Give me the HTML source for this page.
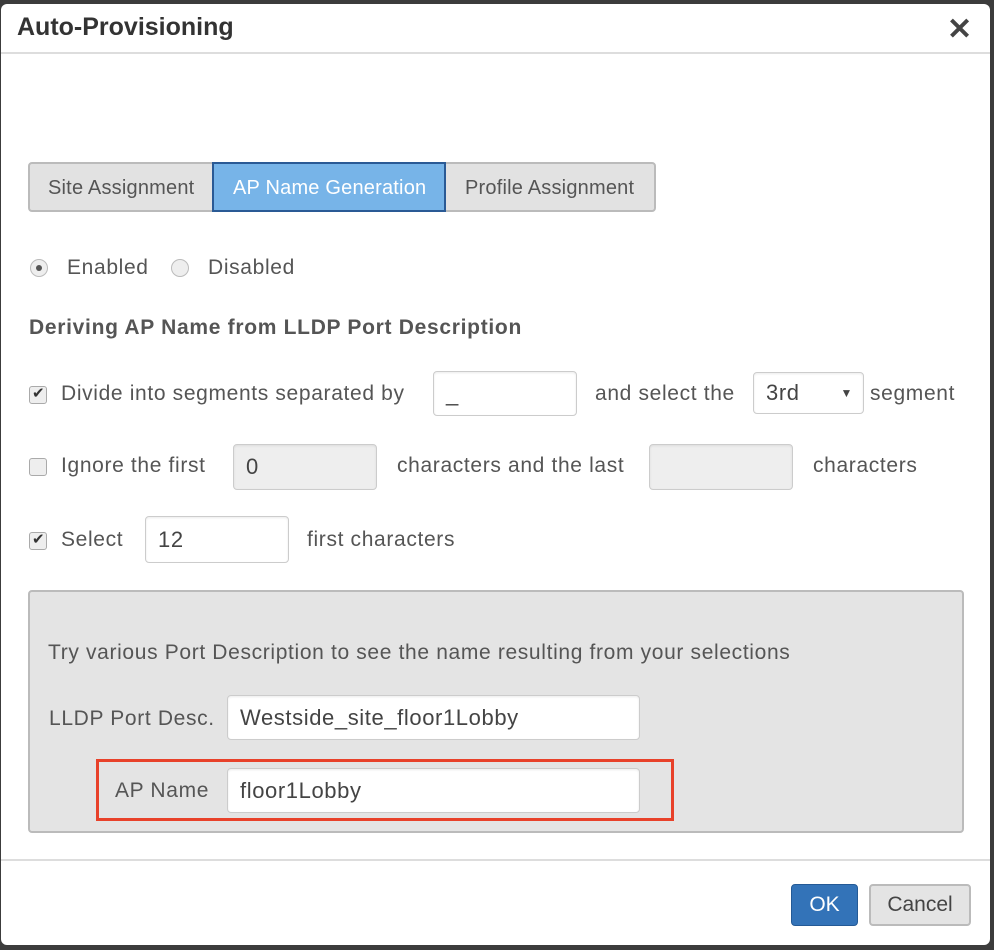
<!DOCTYPE html><html><head><style>
body{margin:0;width:994px;height:950px;background:#3c3c3c;font-family:"Liberation Sans",sans-serif;color:#555;position:relative;overflow:hidden}
.d{position:absolute;left:1px;top:4px;width:989px;height:941px;background:#fff;border-radius:6px}
.a{position:absolute;white-space:nowrap}
.t{font-size:21px;line-height:24px;letter-spacing:0.65px}
.tab{font-size:20px;line-height:24px;letter-spacing:0.2px}
.inp{position:absolute;box-sizing:border-box;border:1px solid #ccc;border-radius:4px;background:#fff;font-size:22px;letter-spacing:0.6px;padding-left:12px;color:#444;box-shadow:inset 0 1px 2px rgba(0,0,0,.08)}
.dis{background:#eee}
.cb{position:absolute;width:18px;height:18px;box-sizing:border-box;border:1px solid #aaa;border-radius:3px;background:#eee}
.cb.on::after{content:"✔";position:absolute;left:2px;top:-3px;font-size:15px;color:#333}
.rd{position:absolute;width:18px;height:18px;box-sizing:border-box;border:1px solid #bbb;border-radius:50%;background:#eee}
</style></head><body>
<div class="d">
<div class="a" style="left:16px;top:9px;font-size:25px;font-weight:bold;color:#333">Auto-Provisioning</div>
<div class="a" style="left:946px;top:8px;font-size:30px;font-weight:bold;color:#444">✕</div>
<div class="a" style="left:0;top:48px;width:989px;height:2px;background:#ddd"></div>

<div class="a" style="left:27px;top:158px;width:628px;height:50px;border:2px solid #bbb;border-radius:4px;background:#e2e2e2;box-sizing:border-box"></div>
<div class="a tab" style="left:47px;top:172px">Site Assignment</div>
<div class="a" style="left:211px;top:158px;width:234px;height:50px;box-sizing:border-box;border:2px solid #2a5a95;background:#77b4e8"></div>
<div class="a tab" style="left:232px;top:172px;color:#fff">AP Name Generation</div>
<div class="a tab" style="left:464px;top:172px">Profile Assignment</div>

<div class="rd" style="left:29px;top:255px"><div style="position:absolute;left:5px;top:5px;width:6px;height:6px;border-radius:50%;background:#555"></div></div>
<div class="a t" style="left:66px;top:252px">Enabled</div>
<div class="rd" style="left:170px;top:255px"></div>
<div class="a t" style="left:207px;top:252px">Disabled</div>

<div class="a" style="left:28px;top:312px;font-weight:bold;font-size:21px;line-height:24px;letter-spacing:0.7px">Deriving AP Name from LLDP Port Description</div>

<div class="cb on" style="left:28px;top:382px"></div>
<div class="a t" style="left:60px;top:378px">Divide into segments separated by</div>
<div class="inp" style="left:432px;top:367px;width:144px;height:45px;line-height:44px">_</div>
<div class="a t" style="left:594px;top:378px">and select the</div>
<div class="inp" style="left:752px;top:368px;width:111px;height:42px;line-height:40px">3rd<span style="position:absolute;right:10px;top:0;font-size:12px">▼</span></div>
<div class="a t" style="left:869px;top:378px">segment</div>

<div class="cb" style="left:28px;top:454px"></div>
<div class="a t" style="left:60px;top:450px">Ignore the first</div>
<div class="inp dis" style="left:232px;top:440px;width:144px;height:46px;line-height:44px">0</div>
<div class="a t" style="left:396px;top:450px">characters and the last</div>
<div class="inp dis" style="left:648px;top:440px;width:144px;height:46px"></div>
<div class="a t" style="left:812px;top:450px">characters</div>

<div class="cb on" style="left:28px;top:528px"></div>
<div class="a t" style="left:60px;top:524px">Select</div>
<div class="inp" style="left:144px;top:512px;width:144px;height:47px;line-height:46px">12</div>
<div class="a t" style="left:306px;top:524px">first characters</div>

<div class="a" style="left:27px;top:586px;width:936px;height:243px;box-sizing:border-box;border:2px solid #bbb;border-radius:4px;background:#e4e4e4"></div>
<div class="a t" style="left:47px;top:637px">Try various Port Description to see the name resulting from your selections</div>
<div class="a t" style="left:48px;top:703px">LLDP Port Desc.</div>
<div class="inp" style="left:226px;top:691px;width:413px;height:45px;line-height:44px">Westside_site_floor1Lobby</div>
<div class="a" style="left:95px;top:755px;width:578px;height:62px;box-sizing:border-box;border:3px solid #e8412a"></div>
<div class="a t" style="left:114px;top:775px">AP Name</div>
<div class="inp" style="left:226px;top:764px;width:413px;height:45px;line-height:44px">floor1Lobby</div>

<div class="a" style="left:0;top:855px;width:989px;height:2px;background:#ddd"></div>
<div class="a" style="left:790px;top:880px;width:67px;height:42px;box-sizing:border-box;border:1px solid #245a96;border-radius:4px;background:#3373b8;color:#fff;font-size:21px;text-align:center;line-height:40px">OK</div>
<div class="a" style="left:868px;top:880px;width:102px;height:42px;box-sizing:border-box;border:2px solid #bbb;border-radius:4px;background:#e4e4e4;color:#444;font-size:21px;text-align:center;line-height:38px">Cancel</div>
</div>
</body></html>
